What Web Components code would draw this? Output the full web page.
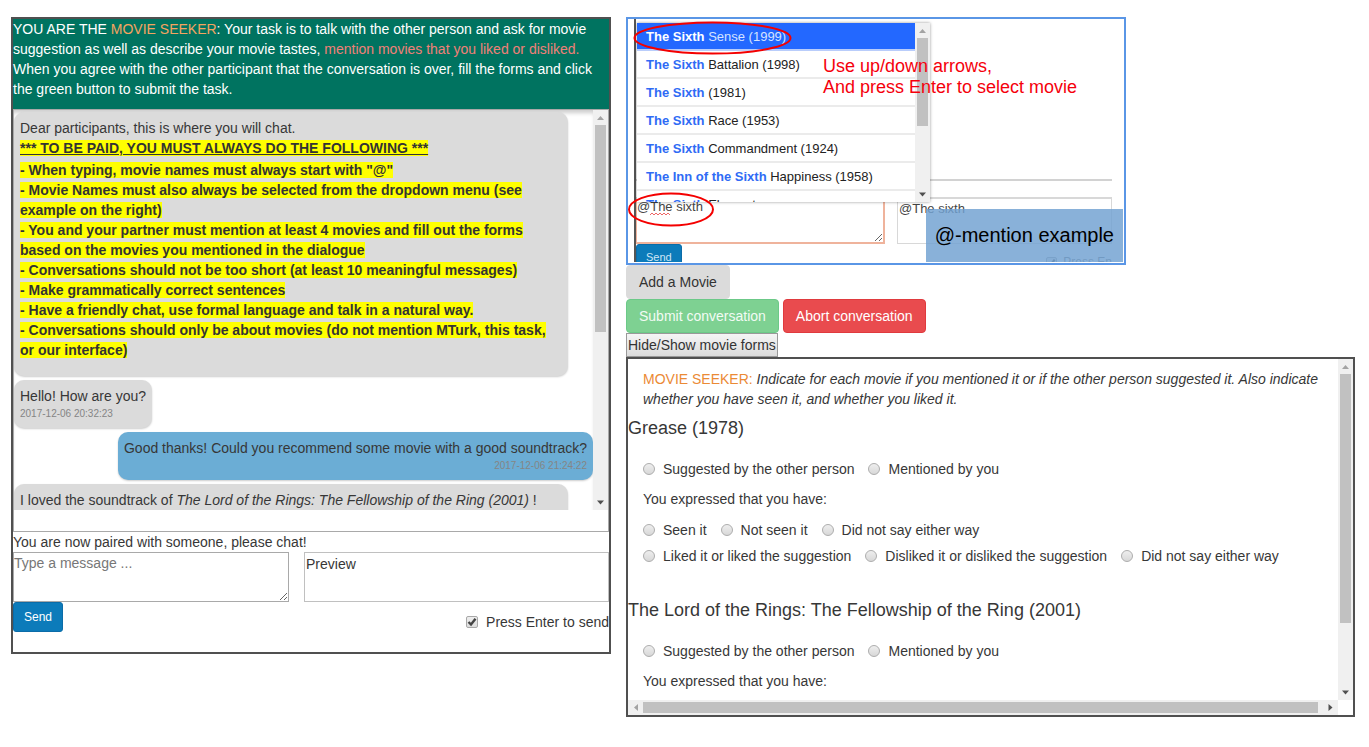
<!DOCTYPE html>
<html lang="en">
<head>
<meta charset="utf-8">
<title>Movie chat task</title>
<style>
  body { margin: 0; background: #fff; color: #373737; font: 14px/20px "Liberation Sans", Arial, sans-serif; }
</style>
</head>
<body>
<task-page>
  <chat-panel slot="chat">
    <task-brief slot="brief">YOU ARE THE <task-role>MOVIE SEEKER</task-role>: Your task is to talk with the other person and ask for movie suggestion as well as describe your movie tastes, <task-role tone="alert">mention movies that you liked or disliked.</task-role> When you agree with the other participant that the conversation is over, fill the forms and click the green button to submit the task.</task-brief>
    <chat-rules></chat-rules>
    <chat-message time="2017-12-06 20:32:23">Hello! How are you?</chat-message>
    <chat-message own time="2017-12-06 21:24:22">Good thanks! Could you recommend some movie with a good soundtrack?</chat-message>
    <chat-message wide time="2017-12-06 21:25:10">I loved the soundtrack of <i>The Lord of the Rings: The Fellowship of the Ring (2001)</i> !</chat-message>
    <chat-composer slot="composer"></chat-composer>
  </chat-panel>
  <mention-example slot="side"></mention-example>
  <task-actions slot="side"></task-actions>
  <form-panel slot="side">
    <movie-form movie="Grease (1978)" group="grease"></movie-form>
    <movie-form movie="The Lord of the Rings: The Fellowship of the Ring (2001)" group="rings"></movie-form>
  </form-panel>
</task-page>

<script>
const define = (name, html, after) => {
  const tpl = document.createElement('template');
  tpl.innerHTML = html;
  customElements.define(name, class extends HTMLElement {
    constructor() {
      super();
      this.attachShadow({ mode: 'open' }).append(tpl.content.cloneNode(true));
    }
    connectedCallback() { if (after) after(this, this.shadowRoot); }
  });
};

define('task-page', `
<style>
  :host { display: block; }
  main { display: grid; grid-template-columns: minmax(0, 600fr) minmax(0, 729fr); gap: 15px; align-items: start; padding: 17px 14px 30px 11px; }
</style>
<main><slot name="chat"></slot><div><slot name="side"></slot></div></main>`);

define('task-brief', `
<style>
  :host { display: block; background: #007360; color: #fff; padding-bottom: 10px; }
</style>
<slot></slot>`);

define('task-role', `
<style>
  :host { display: inline; color: #f4a460; }
  :host([tone="alert"]) { color: #f08078; }
</style>
<slot></slot>`);

/* Classic scroll bar: two arrow buttons around a track with a thumb.
   --thumb is the share of the track taken by the thumb. */
define('scroll-track', `
<style>
  :host { display: flex; flex-direction: column; flex: none; width: 15px; background: #f0f0f0; }
  svg { display: block; flex: none; width: 15px; height: 15px; }
  .track { flex: 1; min-height: 0; min-width: 0; }
  .thumb { height: var(--thumb); margin: 0 2px; background: #c1c1c1; }
  .start { fill: #a3a3a3; }
  .end { fill: #505050; }
  :host([horizontal]) { flex-direction: row; width: auto; height: 15px; }
  :host([horizontal]) svg { transform: rotate(-90deg); }
  :host([horizontal]) .thumb { width: var(--thumb); height: 11px; margin: 2px 0; }
</style>
<svg class="start" viewBox="0 0 15 15"><path d="M4 10 7.500 6 11 10z"/></svg>
<div class="track"><div class="thumb"></div></div>
<svg class="end" viewBox="0 0 15 15"><path d="M4 5.500H11L7.500 9.500z"/></svg>`);

define('chat-panel', `
<style>
  :host { display: block; border: 2px solid #505050; padding-bottom: 20px; }
  .log { border: 1px solid #a9a9a9; padding-bottom: 21px; }
  .view { display: flex; height: 400px; overflow: hidden; }
  .messages { flex: 1; min-width: 0; display: flex; flex-direction: column; align-items: flex-start; gap: 4px; padding-top: 2px; box-shadow: inset 0 5px 4px -2px rgba(0,0,0,.2); }
  scroll-track { --thumb: 56%; }
</style>
<slot name="brief"></slot>
<div class="log"><div class="view">
  <div class="messages"><slot></slot></div>
  <scroll-track></scroll-track>
</div></div>
<slot name="composer"></slot>`);

define('chat-rules', `
<style>
  :host { display: block; flex: none; box-sizing: border-box; width: calc(100% - 25px); padding: 6px 6px 16px; border-radius: 10px; background: #dbdbdb; box-shadow: 0 1px 2px rgba(0,0,0,.2); }
  p { margin: 0; }
  mark { background: #ff0; color: #333; font-weight: bold; }
  u { text-decoration-thickness: 1px; }
  ul { list-style: none; margin: 2px 0 0; padding: 0 10px 0 0; }
</style>
<p>Dear participants, this is where you will chat.</p>
<p><mark><u>*** TO BE PAID, YOU MUST ALWAYS DO THE FOLLOWING ***</u></mark></p>
<ul>
  <li><mark>- When typing, movie names must always start with "@"</mark></li>
  <li><mark>- Movie Names must also always be selected from the dropdown menu (see example on the right)</mark></li>
  <li><mark>- You and your partner must mention at least 4 movies and fill out the forms based on the movies you mentioned in the dialogue</mark></li>
  <li><mark>- Conversations should not be too short (at least 10 meaningful messages)</mark></li>
  <li><mark>- Make grammatically correct sentences</mark></li>
  <li><mark>- Have a friendly chat, use formal language and talk in a natural way.</mark></li>
  <li><mark>- Conversations should only be about movies (do not mention MTurk, this task, or our interface)</mark></li>
</ul>`);

define('chat-message', `
<style>
  :host { display: block; flex: none; box-sizing: border-box; padding: 6px; border-radius: 10px; background: #dbdbdb; box-shadow: 0 1px 2px rgba(0,0,0,.2); }
  :host([own]) { align-self: flex-end; background: #6badd5; text-align: right; }
  :host([wide]) { width: calc(100% - 25px); }
  time { display: block; font-size: 10px; line-height: 16px; color: #858585; }
</style>
<slot></slot><time></time>`,
(el, root) => { root.querySelector('time').textContent = el.getAttribute('time'); });

define('chat-composer', `
<style>
  :host { display: block; }
  p { margin: 0; }
  .fields { display: grid; grid-template-columns: minmax(0, 276fr) minmax(0, 305fr); gap: 15px; }
  textarea, .preview { box-sizing: border-box; height: 50px; margin: 0; border: 1px solid #a9a9a9; font: inherit; }
  textarea { display: block; width: 100%; padding: 0; background: #fff; color: #333; resize: both; }
  textarea::placeholder { color: #777; }
  .preview { padding: 1px; border-color: #c0c0c0; }
  .foot { display: flex; justify-content: space-between; align-items: flex-start; }
  button { height: 30px; padding: 0 10px; border: 1px solid #0b6ca8; border-radius: 3px; background: #0c7bba; color: #fff; font: 12px/18px "Liberation Sans", Arial, sans-serif; }
  label { display: flex; align-items: center; gap: 8px; padding-top: 10px; }
  input { appearance: none; box-sizing: border-box; width: 12px; height: 12px; margin: 0; border: 1px solid #a8a8a8; border-radius: 2px; background: linear-gradient(#eee, #ddd); }
  .tick { display: grid; }
  .tick > * { grid-area: 1 / 1; }
  svg { width: 12px; height: 12px; pointer-events: none; }
</style>
<p>You are now paired with someone, please chat!</p>
<div class="fields">
  <textarea aria-label="Message" placeholder="Type a message ..."></textarea>
  <div class="preview">Preview</div>
</div>
<div class="foot">
  <button type="button">Send</button>
  <label><span class="tick"><input type="checkbox" checked><svg viewBox="0 0 12 12"><path d="M2.500 6 5 8.500 9.500 2.800" fill="none" stroke="#444" stroke-width="2.400"/></svg></span>Press Enter to send</label>
</div>`);

define('mention-example', `
<style>
  :host { display: block; box-sizing: border-box; max-width: 500px; border: 2px solid #5a96e6; font-size: 12px; }
  .scene { position: relative; height: 244px; overflow: hidden; }
  .page { box-sizing: border-box; height: 243px; overflow: hidden; margin-left: 6px; border-left: 2px solid #555; }
  .log { height: 160px; margin-right: 12px; border-bottom: 2px solid #d2d2d2; }
  .gap { height: 16px; margin-right: 12px; border-bottom: 2px solid #d8d8d8; }
  .fields { display: grid; grid-template-columns: 249px 1fr; gap: 12px; }
  textarea, .preview { box-sizing: border-box; height: 45px; border: 1px solid #d8d8d8; font: 13px/16px "Liberation Sans", Arial, sans-serif; color: #444; }
  textarea { display: block; width: 100%; margin: 0; padding: 0; border: 2px solid #efb39c; border-width: 0 2px 2px 1px; background: #fff; resize: both; }
  .preview { margin-right: 12px; border-top: 0; padding: 2px 1px 0; }
  .foot { display: flex; justify-content: space-between; align-items: flex-start; padding-right: 12px; }
  button { height: 26px; padding: 0 9px; border: 1px solid #0b6ca8; border-radius: 3px; background: #0c7bba; color: #cfe6f5; font: 11px/16px "Liberation Sans", Arial, sans-serif; }
  label { display: flex; align-items: center; gap: 6px; padding-top: 8px; height: 20px; color: #777; }
  input { appearance: none; box-sizing: border-box; width: 11px; height: 11px; margin: 0; border: 1px solid #a8a8a8; border-radius: 2px; background: #e4e4e4; }
  .tick { display: grid; }
  .tick > * { grid-area: 1 / 1; }
  .tick svg { width: 11px; height: 11px; pointer-events: none; }
  .menu { position: absolute; left: 9px; top: 4px; display: flex; width: 293px; height: 179px; overflow: hidden; background: #fff; box-shadow: 0 0 3px rgba(0,0,0,.4); }
  ul { flex: 1; list-style: none; margin: 0; padding: 0; }
  li { box-sizing: border-box; height: 28px; padding-left: 9px; border-bottom: 2px solid #ebebeb; font-size: 13px; line-height: 27px; white-space: nowrap; color: #222; }
  li b { color: #2f6bf5; }
  li.on { background: #2368ff; color: #d5e3ff; border-color: #b9cdfb; }
  li.on b { color: #fff; }
  scroll-track { --thumb: 59%; }
  .tip { position: absolute; left: 195px; top: 37px; margin: 0; font-size: 18px; line-height: 21px; color: #f5000c; white-space: nowrap; }
  figcaption { position: absolute; right: 1px; bottom: 1px; box-sizing: border-box; height: 53px; padding: 0 9px; background: rgba(113,161,209,.83); color: #000; font-size: 20px; line-height: 52px; white-space: nowrap; }
  .rings { position: absolute; left: 0; top: 0; width: 496px; height: 244px; fill: none; stroke: #f40000; stroke-width: 2; pointer-events: none; }
  figure { margin: 0; }
</style>
<figure class="scene">
  <div class="page">
    <div class="log"></div><div class="gap"></div>
    <div class="fields"><textarea aria-label="Example message" spellcheck="false">@The sixth</textarea><div class="preview">@The sixth</div></div>
    <div class="foot"><button type="button">Send</button><label><span class="tick"><input type="checkbox" checked><svg viewBox="0 0 12 12"><path d="M2.500 6 5 8.500 9.500 2.800" fill="none" stroke="#444" stroke-width="2.400"/></svg></span>Press En</label></div>
  </div>
  <div class="menu">
    <ul>
      <li class="on"><b>The Sixth</b> Sense (1999)</li>
      <li><b>The Sixth</b> Battalion (1998)</li>
      <li><b>The Sixth</b> (1981)</li>
      <li><b>The Sixth</b> Race (1953)</li>
      <li><b>The Sixth</b> Commandment (1924)</li>
      <li><b>The Inn of the Sixth</b> Happiness (1958)</li>
      <li><b>The Sixth</b> Element</li>
    </ul>
    <scroll-track></scroll-track>
  </div>
  <p class="tip">Use up/down arrows,<br>And press Enter to select movie</p>
  <figcaption>@-mention example</figcaption>
  <svg class="rings" viewBox="0 0 496 244"><ellipse cx="84.500" cy="19" rx="78" ry="15.500"/><ellipse cx="43" cy="190.500" rx="42" ry="16"/><path d="M22 196l2-2 2 2 2-2 2 2 2-2 2 2 2-2 2 2 2-2 2 2" stroke="#e66" stroke-width="1"/></svg>
</figure>`);

define('task-actions', `
<style>
  :host { display: flex; flex-direction: column; align-items: flex-start; }
  .pair { display: flex; gap: 4px; }
  button { box-sizing: border-box; height: 34px; padding: 0 12px; border: 1px solid #dbdbdb; border-radius: 4px; background: #dbdbdb; color: #333; font: inherit; }
  .submit { background: #7ed192; border-color: #6cc988; color: #f2fbf4; }
  .abort { background: #e94b4e; border-color: #e03a3e; color: #fff; }
  .toggle { height: 24px; padding: 0 1px; border-color: #999; border-radius: 0; background: linear-gradient(#f5f5f5, #dcdcdc); }
</style>
<button type="button">Add a Movie</button>
<div class="pair"><button type="button" class="submit">Submit conversation</button><button type="button" class="abort">Abort conversation</button></div>
<button type="button" class="toggle">Hide/Show movie forms</button>`);

define('form-panel', `
<style>
  :host { display: block; border: 2px solid #505050; }
  .frame { display: grid; grid-template: 341px 15px / minmax(0, 1fr) 15px; }
  .view { overflow: hidden; }
  .intro { margin: 0; padding: 10px 15px 9px; }
  .intro span { color: #eb8a35; }
  .down { --thumb: 80%; }
  .across { --thumb: calc(100% - 5px); }
</style>
<div class="frame">
  <div class="view">
    <p class="intro"><span>MOVIE SEEKER:</span> <i>Indicate for each movie if you mentioned it or if the other person suggested it. Also indicate whether you have seen it, and whether you liked it.</i></p>
    <slot></slot>
  </div>
  <scroll-track class="down"></scroll-track>
  <scroll-track class="across" horizontal></scroll-track>
</div>`);

define('movie-form', `
<style>
  :host { display: block; padding-bottom: 34px; }
  h2 { margin: 0 0 21px; font-size: 18px; line-height: 20px; font-weight: normal; }
  .body { display: flex; flex-direction: column; padding-left: 15px; }
  p { margin: 10px 0 11px; }
  .row { display: flex; gap: 14px; white-space: nowrap; }
  .row + .row { margin-top: 6px; }
  label { display: flex; align-items: center; gap: 8px; }
  input { appearance: none; box-sizing: border-box; flex: none; width: 12px; height: 12px; margin: 0; border: 1px solid #adadad; border-radius: 50%; background: linear-gradient(#eee, #d8d8d8); }
</style>
<h2></h2>
<div class="body">
  <div class="row">
    <label><input type="radio" name="origin">Suggested by the other person</label>
    <label><input type="radio" name="origin">Mentioned by you</label>
  </div>
  <p>You expressed that you have:</p>
  <div class="row">
    <label><input type="radio" name="seen">Seen it</label>
    <label><input type="radio" name="seen">Not seen it</label>
    <label><input type="radio" name="seen">Did not say either way</label>
  </div>
  <div class="row">
    <label><input type="radio" name="liked">Liked it or liked the suggestion</label>
    <label><input type="radio" name="liked">Disliked it or disliked the suggestion</label>
    <label><input type="radio" name="liked">Did not say either way</label>
  </div>
</div>`,
(el, root) => {
  root.querySelector('h2').textContent = el.getAttribute('movie');
  root.querySelectorAll('input').forEach(i => { i.name = el.getAttribute('group') + '-' + i.name; });
});
</script>
</body>
</html>
